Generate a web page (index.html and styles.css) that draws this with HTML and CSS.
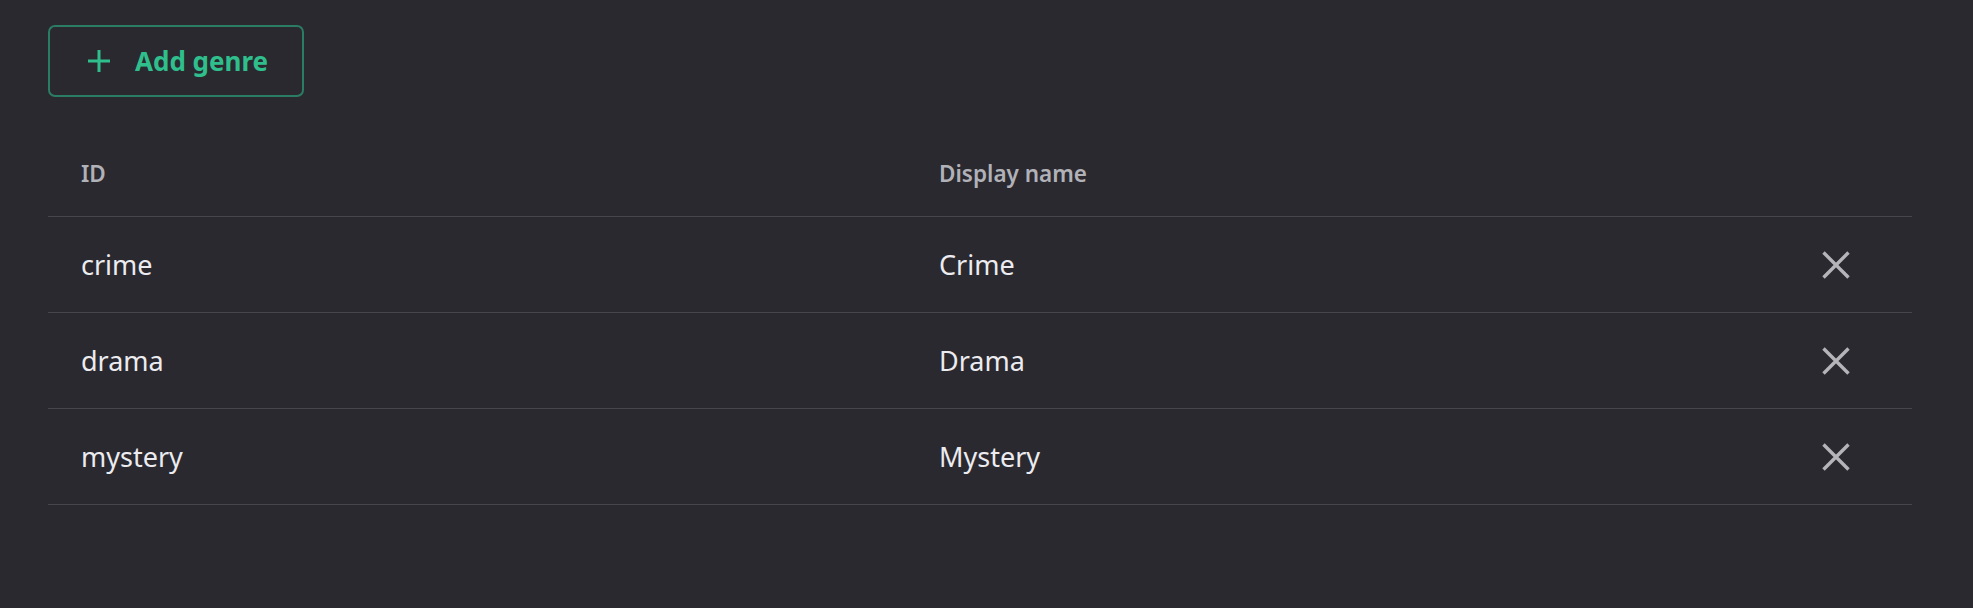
FILE: index.html
```html
<!DOCTYPE html>
<html>
<head>
<meta charset="utf-8">
<link rel="stylesheet" href="styles.css">
</head>
<body>
<div class="page">
  <button class="add-btn">
    <svg class="plus" width="24" height="24" viewBox="0 0 24 24"><path d="M12 1V23M1 12H23" stroke="currentColor" stroke-width="3" fill="none"/></svg>
    <span>Add genre</span>
  </button>
  <table class="genres">
    <thead>
      <tr><th class="c-id">ID</th><th class="c-name">Display name</th><th class="c-act"></th></tr>
    </thead>
    <tbody>
      <tr><td class="c-id">crime</td><td class="c-name">Crime</td><td class="c-act"><svg class="x" width="28" height="28" viewBox="0 0 28 28"><path d="M1.5 1.5L26.5 26.5M26.5 1.5L1.5 26.5" stroke="currentColor" stroke-width="3.4" fill="none"/></svg></td></tr>
      <tr><td class="c-id">drama</td><td class="c-name">Drama</td><td class="c-act"><svg class="x" width="28" height="28" viewBox="0 0 28 28"><path d="M1.5 1.5L26.5 26.5M26.5 1.5L1.5 26.5" stroke="currentColor" stroke-width="3.4" fill="none"/></svg></td></tr>
      <tr><td class="c-id">mystery</td><td class="c-name">Mystery</td><td class="c-act"><svg class="x" width="28" height="28" viewBox="0 0 28 28"><path d="M1.5 1.5L26.5 26.5M26.5 1.5L1.5 26.5" stroke="currentColor" stroke-width="3.4" fill="none"/></svg></td></tr>
    </tbody>
  </table>
</div>
</body>
</html>
```
FILE: styles.css
```css
html, body {
  margin: 0;
  background: #2a292f;
  font-family: "Noto Sans", "Open Sans", sans-serif;
}
.page {
  padding: 25px 61px 0 48px;
}
.add-btn {
  display: flex;
  align-items: center;
  gap: 24px;
  height: 72px;
  width: 256px;
  padding: 0 0 0 37px;
  background: transparent;
  border: 2px solid #2a7c62;
  border-radius: 7px;
  color: #2fbf8c;
  font-family: inherit;
  font-size: 26px;
  font-weight: 700;
}
.plus { display: block; }
.genres {
  margin-top: 33px;
  width: 100%;
  border-collapse: collapse;
}
.genres th, .genres td {
  text-align: left;
  padding: 0 0 0 33px;
  border-bottom: 1px solid #47464c;
}
.genres th {
  height: 86px;
  font-size: 22.5px;
  font-weight: 600;
  color: #b1b1b8;
}
.genres td {
  height: 95px;
  font-size: 27px;
  color: #ececf0;
}
.c-id { width: 825px; }
.genres .c-act { width: 28px; padding: 0 62px 0 0; }
.x { display: block; color: #b4b4b9; }
```
